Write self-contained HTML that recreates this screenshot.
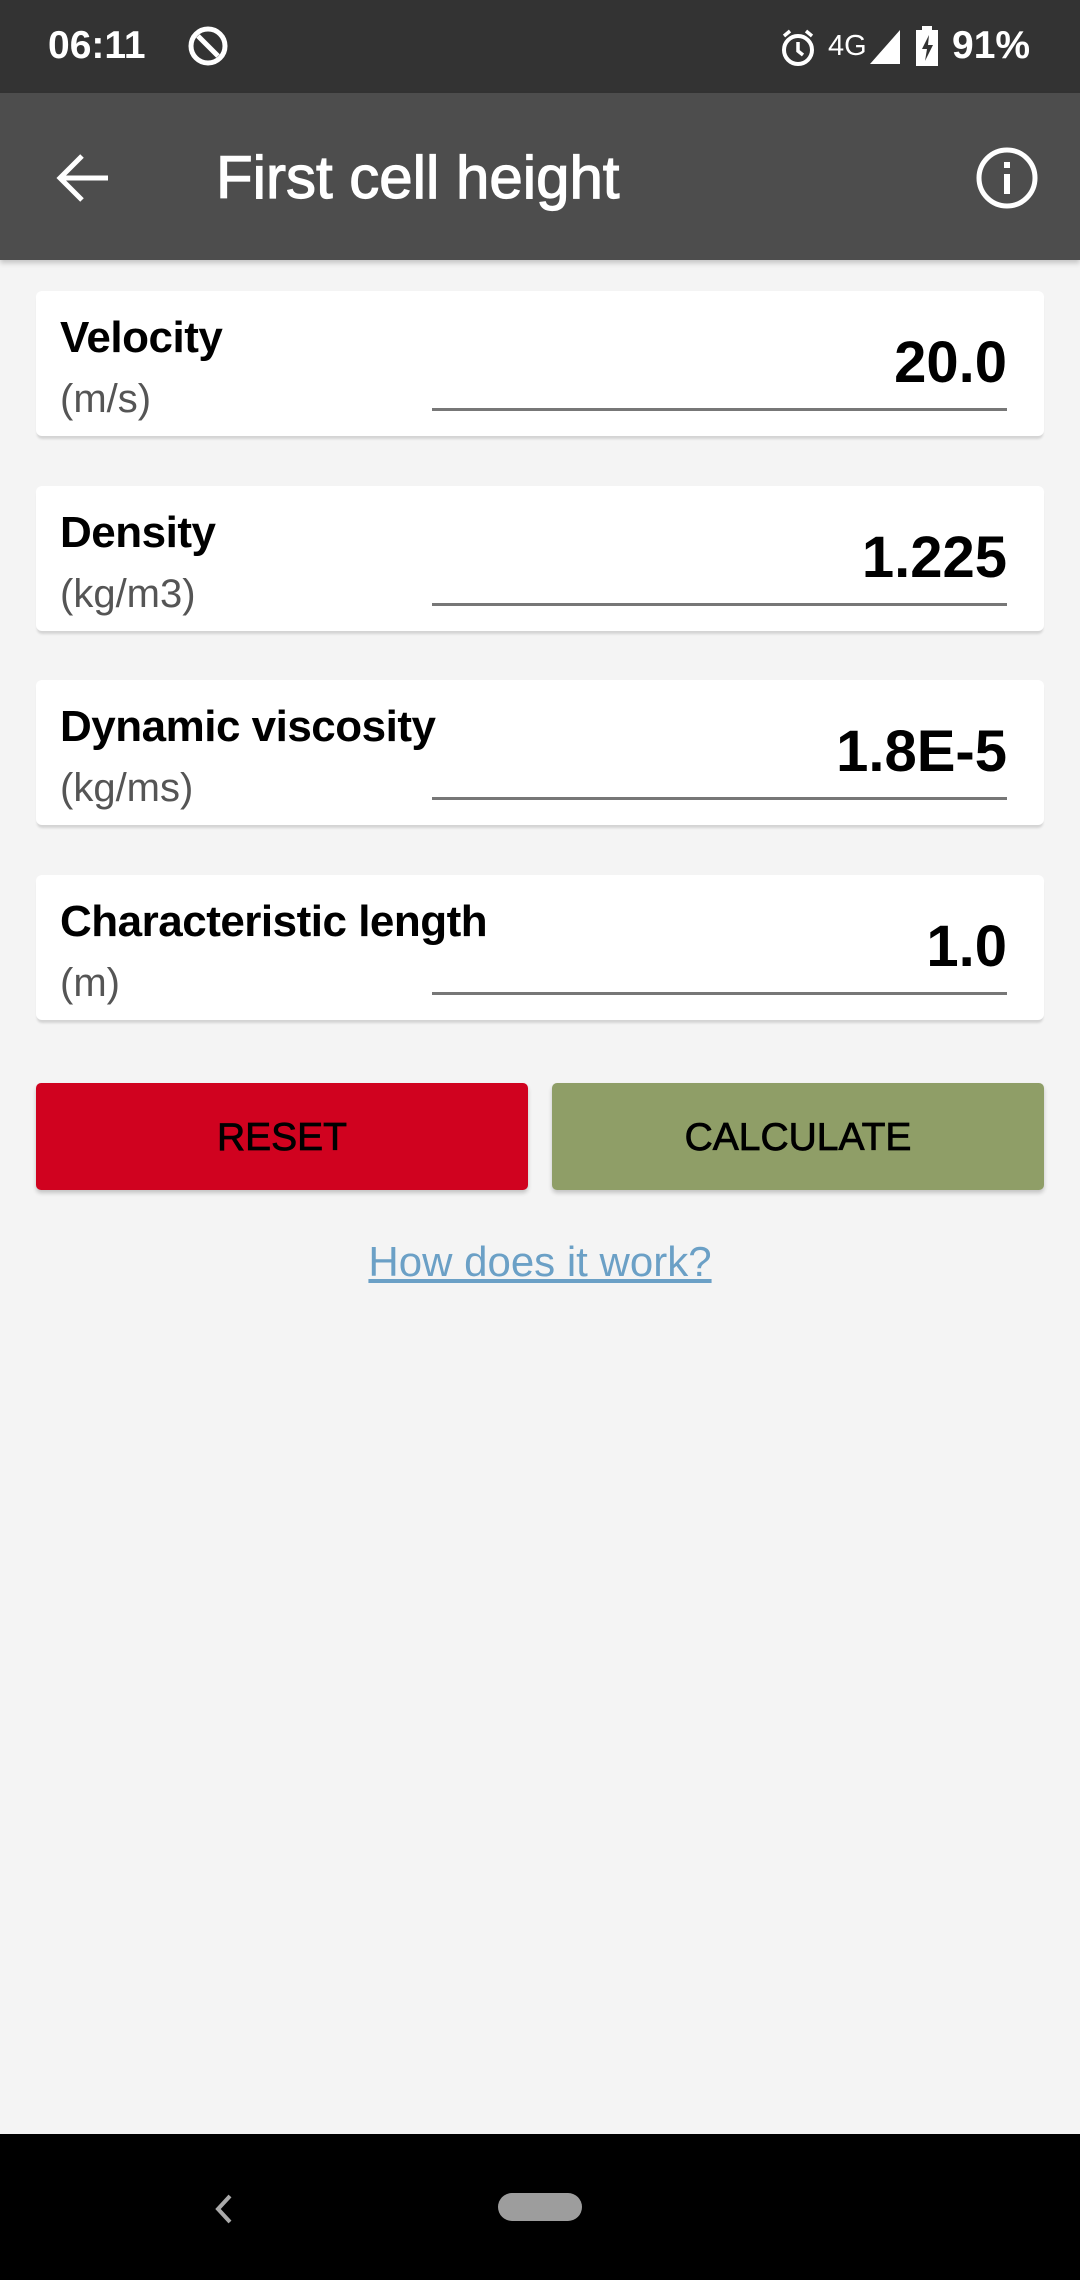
<!DOCTYPE html>
<html><head><style>
*{margin:0;padding:0;box-sizing:border-box}
body{width:1080px;height:2280px;background:#f4f4f4;font-family:"Liberation Sans",sans-serif;position:relative;overflow:hidden}
.abs{position:absolute}
.card{position:absolute;left:36px;width:1008px;height:145px;background:#fff;border-radius:6px;box-shadow:0 4px 2px -1px #d4d4d4}
.lbl{position:absolute;left:24px;top:22px;font-size:44px;font-weight:bold;color:#000;letter-spacing:-0.5px}
.unit{position:absolute;left:24px;top:86px;font-size:40px;color:#555}
.val{position:absolute;right:37px;top:38px;font-size:58px;font-weight:bold;color:#000}
.line{position:absolute;left:396px;right:37px;top:117px;height:3px;background:#777}
.btn{position:absolute;top:1083px;height:107px;width:492px;border-radius:5px;box-shadow:0 3px 4px rgba(0,0,0,.2);font-size:39px;text-align:center;line-height:110px;color:#000;-webkit-text-stroke:0.8px #000}
</style></head><body>
<div class="abs" style="left:0;top:0;width:1080px;height:93px;background:#333"></div>
<div class="abs" style="left:48px;top:24px;font-size:39px;color:#fff;font-weight:bold">06:11</div>
<svg class="abs" style="left:186px;top:26px" width="46" height="44" viewBox="0 0 46 44"><circle cx="22" cy="20" r="17" fill="none" stroke="#fff" stroke-width="5"/><path d="M12 10 L32 30" stroke="#fff" stroke-width="5"/></svg>
<svg class="abs" style="left:778px;top:28px" width="40" height="40" viewBox="0 0 40 40"><circle cx="20" cy="22" r="14" fill="none" stroke="#fff" stroke-width="4"/><path d="M20 14v9l5 4M6 8l6-5M34 8l-6-5" stroke="#fff" stroke-width="3.5" fill="none"/></svg>
<div class="abs" style="left:828px;top:30px;font-size:29px;color:#fff">4G</div>
<svg class="abs" style="left:870px;top:28px" width="32" height="36"><path d="M0 36L30 2V36Z" fill="#fff"/></svg>
<svg class="abs" style="left:916px;top:26px" width="22" height="40"><rect x="0" y="4" width="22" height="36" fill="#fff"/><rect x="6" y="0" width="10" height="5" fill="#fff"/><path d="M13 9L6 23h5l-2 12 8-16h-5z" fill="#333"/></svg>
<div class="abs" style="left:952px;top:24px;font-size:39px;color:#fff;font-weight:bold">91%</div>
<div class="abs" style="left:0;top:93px;width:1080px;height:167px;background:#4d4d4d;box-shadow:0 3px 5px rgba(0,0,0,.2)"></div>
<svg class="abs" style="left:56px;top:152px" width="56" height="52" viewBox="0 0 56 52"><path d="M52 26H6M26 4L4 26l22 22" stroke="#fff" stroke-width="5" fill="none"/></svg>
<div class="abs" style="left:216px;top:143px;font-size:60px;color:#fff;-webkit-text-stroke:1.2px #fff">First cell height</div>
<svg class="abs" style="left:975px;top:146px" width="64" height="64" viewBox="0 0 64 64"><circle cx="32" cy="32" r="28" fill="none" stroke="#fff" stroke-width="5"/><rect x="29" y="28" width="6" height="20" fill="#fff"/><rect x="29" y="16" width="6" height="6" fill="#fff"/></svg>

<div class="card" style="top:291px"><div class="lbl">Velocity</div><div class="unit">(m/s)</div><div class="val">20.0</div><div class="line"></div></div>
<div class="card" style="top:486px"><div class="lbl">Density</div><div class="unit">(kg/m3)</div><div class="val">1.225</div><div class="line"></div></div>
<div class="card" style="top:680px"><div class="lbl">Dynamic viscosity</div><div class="unit">(kg/ms)</div><div class="val">1.8E-5</div><div class="line"></div></div>
<div class="card" style="top:875px"><div class="lbl">Characteristic length</div><div class="unit">(m)</div><div class="val">1.0</div><div class="line"></div></div>

<div class="btn" style="left:36px;background:#d0021f">RESET</div>
<div class="btn" style="left:552px;background:#8f9e67">CALCULATE</div>
<div class="abs" style="left:0;width:1080px;top:1238px;text-align:center;font-size:42px;color:#6ba0c6;text-decoration:underline">How does it work?</div>

<div class="abs" style="left:0;top:2134px;width:1080px;height:146px;background:#000"></div>
<svg class="abs" style="left:210px;top:2192px" width="26" height="34"><path d="M20 4L8 17l12 13" stroke="#aaa" stroke-width="4" fill="none"/></svg>
<div class="abs" style="left:498px;top:2193px;width:84px;height:28px;border-radius:14px;background:#9d9d9d"></div>
</body></html>
